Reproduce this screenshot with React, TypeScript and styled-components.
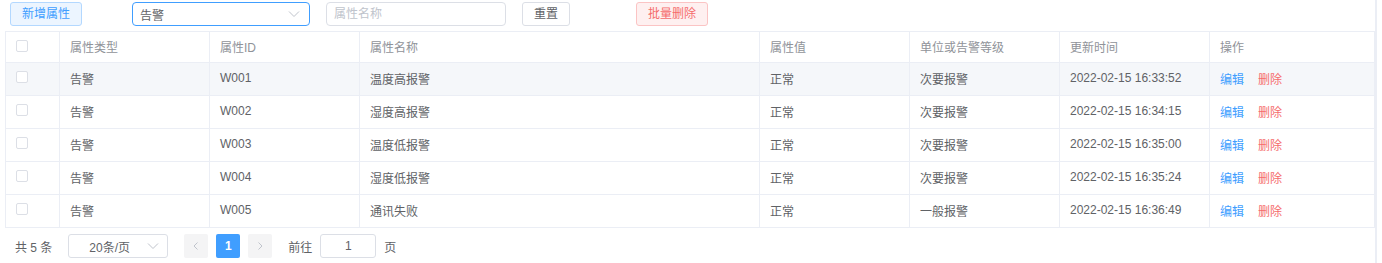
import styled, { createGlobalStyle } from 'styled-components'

/*---> Data <---*/
const rows = [
  { type: '告警', id: 'W001', name: '温度高报警', value: '正常', level: '次要报警', time: '2022-02-15 16:33:52' },
  { type: '告警', id: 'W002', name: '湿度高报警', value: '正常', level: '次要报警', time: '2022-02-15 16:34:15' },
  { type: '告警', id: 'W003', name: '温度低报警', value: '正常', level: '次要报警', time: '2022-02-15 16:35:00' },
  { type: '告警', id: 'W004', name: '湿度低报警', value: '正常', level: '次要报警', time: '2022-02-15 16:35:24' },
  { type: '告警', id: 'W005', name: '通讯失败', value: '正常', level: '一般报警', time: '2022-02-15 16:36:49' },
]

const columns = [
  { title: '属性类型', width: 150 },
  { title: '属性ID', width: 150 },
  { title: '属性名称', width: 400 },
  { title: '属性值', width: 150 },
  { title: '单位或告警等级', width: 150 },
  { title: '更新时间', width: 150 },
  { title: '操作', width: undefined },
]

const Chevron = ({ left }: { left?: boolean }) => (
  <svg width='10' height='10' viewBox='0 0 10 10' fill='none'>
    {left ? (
      <path d='M6.5 1.5 3 5l3.5 3.5' stroke='currentColor' strokeWidth='1' />
    ) : (
      <path d='M3.5 1.5 7 5 3.5 8.5' stroke='currentColor' strokeWidth='1' />
    )}
  </svg>
)

const ArrowDown = () => (
  <svg width='12' height='8' viewBox='0 0 12 8' fill='none'>
    <path d='M1 1.5 6 6.5l5-5' stroke='currentColor' strokeWidth='1' />
  </svg>
)

/*---> Components <---*/
const App = () => {
  return (
    <>
      <GlobalStyle />
      <Page>
        <Toolbar>
          <LightButton>新增属性</LightButton>
          <SelectBox $width={178} $focused>
            <span>告警</span>
            <ArrowWrap>
              <ArrowDown />
            </ArrowWrap>
          </SelectBox>
          <TextInput placeholder='属性名称' />
          <PlainButton>重置</PlainButton>
          <DangerButton>批量删除</DangerButton>
        </Toolbar>
        <Table>
          <colgroup>
            <col style={{ width: 54 }} />
            {columns.map((c) => (
              <col key={c.title} style={c.width ? { width: c.width } : undefined} />
            ))}
          </colgroup>
          <thead>
            <tr>
              <Th>
                <Checkbox />
              </Th>
              {columns.map((c) => (
                <Th key={c.title}>{c.title}</Th>
              ))}
            </tr>
          </thead>
          <tbody>
            {rows.map((r, i) => (
              <Tr key={r.id} $hover={i === 0}>
                <Td>
                  <Checkbox />
                </Td>
                <Td>{r.type}</Td>
                <Td>{r.id}</Td>
                <Td>{r.name}</Td>
                <Td>{r.value}</Td>
                <Td>{r.level}</Td>
                <Td>{r.time}</Td>
                <Td>
                  <LinkText $color='#409eff'>编辑</LinkText>
                  <LinkText $color='#f56c6c'>删除</LinkText>
                </Td>
              </Tr>
            ))}
          </tbody>
        </Table>
        <Pagination>
          <Total>共 5 条</Total>
          <SizeSelect>
            <span>20条/页</span>
            <SizeArrow>
              <ArrowDown />
            </SizeArrow>
          </SizeSelect>
          <PagerButton disabled>
            <Chevron left />
          </PagerButton>
          <PagerButton $active>1</PagerButton>
          <PagerButton disabled>
            <Chevron />
          </PagerButton>
          <JumpText>前往</JumpText>
          <JumpInput defaultValue='1' />
          <JumpText>页</JumpText>
        </Pagination>
      </Page>
    </>
  )
}

/*---> Styles <---*/
const GlobalStyle = createGlobalStyle`
  html, body {
    margin: 0;
    padding: 0;
    background: #ffffff;
  }
  body {
    font-family: "Liberation Sans", "Noto Sans CJK SC", Arial, sans-serif;
    font-size: 12px;
    color: #606266;
  }
  * {
    box-sizing: border-box;
  }
`

const Page = styled.div`
  width: 1377px;
  height: 263px;
  padding: 2px 0 0 5px;
  border-right: 2px solid #ebeef5;
`

const Toolbar = styled.div`
  display: flex;
  align-items: center;
  height: 24px;
  padding-left: 5px;
  margin-bottom: 5px;
`

const BaseButton = styled.button`
  height: 24px;
  padding: 0 11px;
  font-family: inherit;
  font-size: 12px;
  border-radius: 3px;
  border: 1px solid;
  cursor: pointer;
  line-height: 1;
`

const LightButton = styled(BaseButton)`
  width: 72px;
  background: #ecf5ff;
  border-color: #b3d8ff;
  color: #409eff;
  margin-right: 50px;
`

const PlainButton = styled(BaseButton)`
  width: 48px;
  background: #ffffff;
  border-color: #dcdfe6;
  color: #606266;
  margin-right: 66px;
`

const DangerButton = styled(BaseButton)`
  width: 72px;
  background: #fef0f0;
  border-color: #fbc4c4;
  color: #f56c6c;
`

const SelectBox = styled.div<{ $width: number; $focused?: boolean }>`
  width: ${(p) => p.$width}px;
  height: 24px;
  display: flex;
  align-items: center;
  justify-content: space-between;
  padding: 0 9px 0 7px;
  border: 1px solid ${(p) => (p.$focused ? '#409eff' : '#dcdfe6')};
  border-radius: 4px;
  color: #606266;
  margin-right: 16px;
`

const ArrowWrap = styled.span`
  display: flex;
  color: #c0c4cc;
`

const TextInput = styled.input`
  width: 180px;
  height: 24px;
  padding: 0 7px;
  border: 1px solid #dcdfe6;
  border-radius: 4px;
  font-family: inherit;
  font-size: 12px;
  color: #606266;
  outline: none;
  margin-right: 16px;

  &::placeholder {
    color: #c0c4cc;
  }
`

const Table = styled.table`
  width: 1370px;
  border-collapse: collapse;
  table-layout: fixed;
  border-top: 1px solid #ebeef5;
  border-left: 1px solid #ebeef5;
  border-right: 1px solid #ebeef5;
`

const Th = styled.th`
  height: 31px;
  padding: 0 10px 1px;
  text-align: left;
  font-weight: normal;
  color: #909399;
  border-right: 1px solid #ebeef5;
  border-bottom: 1px solid #ebeef5;
  vertical-align: middle;
`

const Tr = styled.tr<{ $hover?: boolean }>`
  background: ${(p) => (p.$hover ? '#f5f7fa' : '#ffffff')};
`

const Td = styled.td`
  height: 33px;
  padding: 0 10px 2px;
  color: #606266;
  border-right: 1px solid #ebeef5;
  border-bottom: 1px solid #ebeef5;
  vertical-align: middle;
  white-space: nowrap;
`

const Checkbox = styled.span`
  display: block;
  width: 12px;
  height: 12px;
  margin-top: -2px;
  border: 1px solid #dcdfe6;
  border-radius: 2px;
  background: #ffffff;
`

const LinkText = styled.span<{ $color: string }>`
  color: ${(p) => p.$color};
  margin-right: 14px;
  cursor: pointer;
`

const Pagination = styled.div`
  display: flex;
  align-items: center;
  height: 36px;
  padding-left: 10px;
`

const Total = styled.span`
  margin-right: 16px;
`

const SizeSelect = styled.div`
  width: 100px;
  height: 24px;
  display: flex;
  align-items: center;
  justify-content: space-between;
  padding: 0 8px 0 20px;
  border: 1px solid #dcdfe6;
  border-radius: 3px;
  margin-right: 16px;
`

const SizeArrow = styled.span`
  display: flex;
  color: #c0c4cc;
`

const PagerButton = styled.button<{ $active?: boolean }>`
  width: 24px;
  height: 24px;
  margin-right: 8px;
  padding: 0;
  display: flex;
  align-items: center;
  justify-content: center;
  border: none;
  border-radius: 2px;
  font-family: inherit;
  font-size: 12px;
  font-weight: bold;
  background: ${(p) => (p.$active ? '#409eff' : '#f4f4f5')};
  color: ${(p) => (p.$active ? '#ffffff' : '#c0c4cc')};
`

const JumpText = styled.span`
  margin: 0 8px;
`

const JumpInput = styled.input`
  width: 56px;
  height: 24px;
  border: 1px solid #dcdfe6;
  border-radius: 3px;
  text-align: center;
  font-family: inherit;
  font-size: 12px;
  color: #606266;
  outline: none;
`

export default App
